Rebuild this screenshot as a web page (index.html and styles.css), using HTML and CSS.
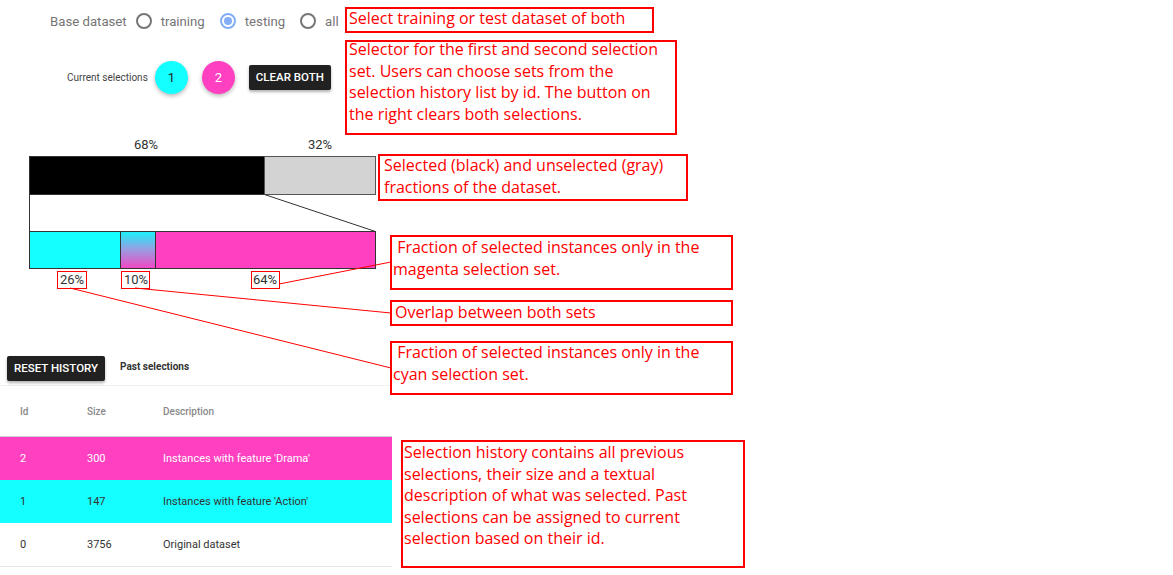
FILE: index.html
```html
<!DOCTYPE html>
<html>
<head>
<meta charset="utf-8">
<link rel="stylesheet" href="styles.css">
</head>
<body>
<div class="page">
  <div class="panel">
    <div class="radio-row">
      <span class="radio-label">Base dataset</span>
      <span class="opt"><span class="radio"></span><span>training</span></span>
      <span class="opt"><span class="radio on"></span><span>testing</span></span>
      <span class="opt"><span class="radio"></span><span>all</span></span>
    </div>
    <div class="sel-row">
      <span class="sel-label">Current selections</span>
      <span class="chip cyan">1</span>
      <span class="chip magenta">2</span>
      <span class="btn">CLEAR BOTH</span>
    </div>
    <svg class="chart" width="392" height="160" viewBox="0 0 392 160">
      <defs>
        <linearGradient id="ov" x1="0" y1="0" x2="0" y2="1">
          <stop offset="0" stop-color="#19f3fb"/>
          <stop offset="0.5" stop-color="#9c9ae0"/>
          <stop offset="1" stop-color="#f445c4"/>
        </linearGradient>
      </defs>
      <text x="146" y="14" class="pct" text-anchor="middle">68%</text>
      <text x="320" y="14" class="pct" text-anchor="middle">32%</text>
      <rect x="29.5" y="21.5" width="235" height="38" fill="#000" stroke="#333"/>
      <rect x="264.5" y="21.5" width="111" height="38" fill="#d3d3d3" stroke="#555"/>
      <line x1="29.5" y1="59.5" x2="29.5" y2="96.5" stroke="#333"/>
      <line x1="264.5" y1="59.5" x2="375.5" y2="96.5" stroke="#333"/>
      <rect x="29.5" y="96.5" width="91" height="37" fill="#14ffff" stroke="#333"/>
      <rect x="120.5" y="96.5" width="35" height="37" fill="url(#ov)" stroke="#333"/>
      <rect x="155.5" y="96.5" width="220" height="37" fill="#ff40c0" stroke="#333"/>
      <text x="72" y="149" class="pct" text-anchor="middle">26%</text>
      <text x="136" y="149" class="pct" text-anchor="middle">10%</text>
      <text x="265" y="149" class="pct" text-anchor="middle">64%</text>
    </svg>
    <div class="hist-head">
      <span class="btn reset">RESET HISTORY</span>
      <span class="past">Past selections</span>
    </div>
    <table class="hist">
      <thead>
        <tr><th>Id</th><th>Size</th><th>Description</th></tr>
      </thead>
      <tbody>
        <tr class="r-mag"><td>2</td><td>300</td><td>Instances with feature 'Drama'</td></tr>
        <tr class="r-cyan"><td>1</td><td>147</td><td>Instances with feature 'Action'</td></tr>
        <tr class="r-plain"><td>0</td><td>3756</td><td>Original dataset</td></tr>
      </tbody>
    </table>
  </div>

  <svg class="callout-lines" width="1173" height="575" viewBox="0 0 1173 575">
    <rect x="57.5" y="271.5" width="29" height="17" fill="none" stroke="#ff0000"/>
    <rect x="121.5" y="271.5" width="28" height="17" fill="none" stroke="#ff0000"/>
    <rect x="251.5" y="271.5" width="28" height="17" fill="none" stroke="#ff0000"/>
    <line x1="279" y1="284" x2="391" y2="262" stroke="#ff0000"/>
    <line x1="135" y1="288" x2="391" y2="313" stroke="#ff0000"/>
    <line x1="70" y1="288" x2="391" y2="368" stroke="#ff0000"/>
  </svg>

  <div class="note n1"><p>Select training or test dataset of both</p></div>
  <div class="note n2"><p>Selector for the first and second selection set. Users can choose sets from the selection history list by id. The button on the right clears both selections.</p></div>
  <div class="note n3"><p>Selected (black) and unselected (gray) fractions of the dataset.</p></div>
  <div class="note n4"><p>&nbsp;Fraction of selected instances only in the magenta selection set.</p></div>
  <div class="note n5"><p>Overlap between both sets</p></div>
  <div class="note n6"><p>&nbsp;Fraction of selected instances only in the cyan selection set.</p></div>
  <div class="note n7"><p>Selection history contains all previous selections, their size and a textual description of what was selected. Past selections can be assigned to current selection based on their id.</p></div>
</div>
</body>
</html>
```

FILE: styles.css
```css
html, body {
  margin: 0;
  padding: 0;
  background: #fff;
}
.page {
  position: relative;
  width: 1173px;
  height: 575px;
  overflow: hidden;
  font-family: Roboto, "Liberation Sans", sans-serif;
}
.panel {
  width: 392px;
  display: flex;
  flex-direction: column;
}
.radio-row {
  margin-top: 11px;
  height: 20px;
  padding-left: 50px;
  display: flex;
  align-items: center;
  font-size: 13.2px;
  color: #757575;
}
.radio-label {
  margin-right: 9px;
}
.opt {
  display: flex;
  align-items: center;
  gap: 9px;
  margin-right: 15px;
}
.radio {
  width: 16px;
  height: 16px;
  box-sizing: border-box;
  border: 2px solid #767676;
  border-radius: 50%;
  display: flex;
  align-items: center;
  justify-content: center;
}
.radio.on {
  border-color: #84aef7;
}
.radio.on::after {
  content: "";
  width: 8px;
  height: 8px;
  border-radius: 50%;
  background: #84aef7;
}
.sel-row {
  margin-top: 30px;
  height: 33px;
  padding-left: 67px;
  display: flex;
  align-items: center;
}
.sel-label {
  font-size: 10px;
  color: #444;
  margin-right: 7px;
}
.chip {
  width: 33px;
  height: 33px;
  border-radius: 50%;
  display: flex;
  align-items: center;
  justify-content: center;
  font-size: 13px;
  box-shadow: 0 2px 4px rgba(0, 0, 0, 0.28);
  margin-right: 14px;
}
.chip.cyan {
  background: #14ffff;
  color: #222;
}
.chip.magenta {
  background: #ff40c0;
  color: #fff;
}
.btn {
  background: #212121;
  color: #fff;
  font-size: 11.5px;
  font-weight: 500;
  height: 25px;
  line-height: 25px;
  padding: 0 7px;
  border-radius: 2px;
  box-shadow: 0 2px 3px rgba(0, 0, 0, 0.3);
}
.chart {
  display: block;
  margin-top: 41px;
}
.pct {
  font-family: Roboto, "Liberation Sans", sans-serif;
  font-size: 13px;
  fill: #333;
}
.hist-head {
  margin-top: 61px;
  height: 29px;
  display: flex;
  align-items: flex-start;
  padding-left: 7px;
  border-bottom: 1px solid #efefef;
}
.hist-head .btn {
  padding: 0 7px;
}
.past {
  font-size: 10px;
  font-weight: 700;
  color: #333;
  margin-left: 15px;
  line-height: 22px;
}
.hist {
  width: 392px;
  border-collapse: collapse;
  font-size: 11px;
}
.hist th {
  height: 50px;
  font-size: 10px;
  font-weight: 500;
  color: #8a8a8a;
  text-align: left;
  padding: 0 0 0 20px;
  border-bottom: 1px solid #cfcfcf;
}
.hist td {
  height: 43px;
  padding: 0 0 0 20px;
  text-align: left;
}
.hist th:nth-child(1), .hist td:nth-child(1) {
  width: 47px;
}
.hist th:nth-child(2), .hist td:nth-child(2) {
  width: 56px;
}
.r-mag {
  background: #ff40c0;
  color: #fff;
}
.r-cyan {
  background: #14ffff;
  color: #333;
}
.r-plain {
  color: #333;
  border-bottom: 1px solid #e6e6e6;
}
.callout-lines {
  position: absolute;
  left: 0;
  top: 0;
  pointer-events: none;
}
.note {
  position: absolute;
  box-sizing: border-box;
  border: 2px solid #ff0000;
  color: #ff0000;
  font-family: "Open Sans", "Liberation Sans", sans-serif;
  font-size: 16px;
  line-height: 21.5px;
  padding: 0 2px;
  background: #fff;
}
.note p {
  margin: -3px 0 0 0;
}
.n1 { left: 345px; top: 7px; width: 309px; height: 26px; }
.n1 p { margin-top: -1px; }
.n2 { left: 345px; top: 40px; width: 332px; height: 95px; }
.n3 { left: 378px; top: 154px; width: 310px; height: 47px; padding-left: 4px; }
.n3 p { margin-top: -1px; }
.n4 { left: 390px; top: 235px; width: 343px; height: 55px; padding-left: 1px; }
.n4 p { margin-top: 0; }
.n5 { left: 390px; top: 300px; width: 343px; height: 26px; padding-left: 3px; }
.n5 p { margin-top: 0; }
.n6 { left: 390px; top: 341px; width: 343px; height: 54px; padding-left: 1px; }
.n6 p { margin-top: -1px; }
.n7 { left: 401px; top: 440px; width: 344px; height: 128px; padding-left: 1px; }
.n7 p { margin-top: 0; }
```
